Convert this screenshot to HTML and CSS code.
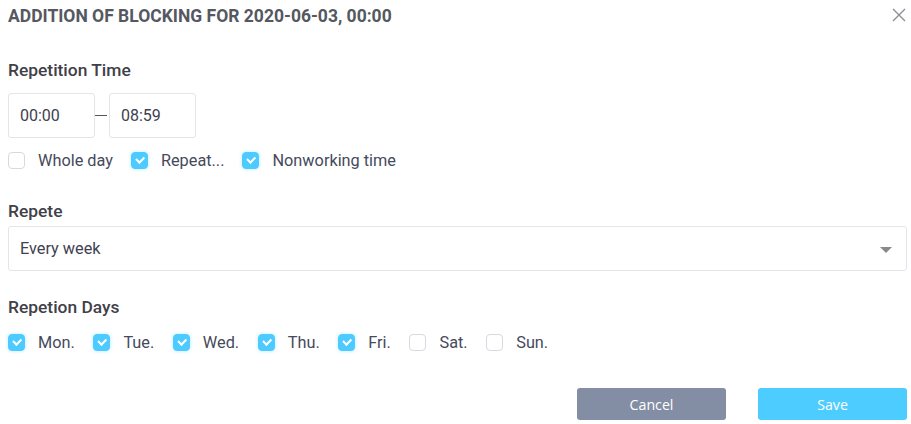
FILE: index.html
```html
<!DOCTYPE html>
<html>
<head>
<meta charset="utf-8">
<link rel="stylesheet" href="styles.css">
</head>
<body>
<div class="dialog">
  <div class="header">
    <h1 class="title">ADDITION OF BLOCKING FOR 2020-06-03, 00:00</h1>
    <button class="close" aria-label="Close">
      <svg width="14" height="14" viewBox="0 0 14 14"><path d="M1 1L13 13M13 1L1 13" stroke="#8a8f98" stroke-width="1.4" fill="none"/></svg>
    </button>
  </div>

  <div class="section sec-time">
    <div class="label">Repetition Time</div>
    <div class="time-row">
      <div class="time-box">00:00</div>
      <span class="dash"></span>
      <div class="time-box">08:59</div>
    </div>
    <div class="checks">
      <label class="check"><span class="box"></span><span class="text">Whole day</span></label>
      <label class="check"><span class="box on"></span><span class="text">Repeat...</span></label>
      <label class="check"><span class="box on"></span><span class="text">Nonworking time</span></label>
    </div>
  </div>

  <div class="section sec-repeat">
    <div class="label">Repete</div>
    <div class="select">
      <span>Every week</span>
      <span class="arrow"></span>
    </div>
  </div>

  <div class="section sec-days">
    <div class="label">Repetion Days</div>
    <div class="checks days">
      <label class="check"><span class="box on"></span><span class="text">Mon.</span></label>
      <label class="check"><span class="box on"></span><span class="text">Tue.</span></label>
      <label class="check"><span class="box on"></span><span class="text">Wed.</span></label>
      <label class="check"><span class="box on"></span><span class="text">Thu.</span></label>
      <label class="check"><span class="box on"></span><span class="text">Fri.</span></label>
      <label class="check"><span class="box"></span><span class="text">Sat.</span></label>
      <label class="check"><span class="box"></span><span class="text">Sun.</span></label>
    </div>
  </div>

  <div class="footer">
    <button class="btn cancel">Cancel</button>
    <button class="btn save">Save</button>
  </div>
</div>
</body>
</html>
```

FILE: styles.css
```css
* { box-sizing: border-box; }
html, body { margin: 0; padding: 0; background: #fff; }
body {
  font-family: Roboto, "Liberation Sans", sans-serif;
  color: #434552;
  width: 911px;
  height: 424px;
  overflow: hidden;
}
.dialog {
  padding: 0 4px 0 8px;
}
.header {
  display: flex;
  justify-content: space-between;
  align-items: flex-start;
  height: 60px;
  padding-top: 6px;
}
.title {
  margin: 0;
  font-size: 17.5px;
  font-weight: 700;
  color: #555860;
  line-height: 20px;
}
.close {
  border: 0;
  background: none;
  padding: 0;
  margin: 2px 1px 0 0;
  width: 14px;
  height: 14px;
  display: flex;
}
.label {
  font-size: 17.4px;
  font-weight: 500;
  color: #3f4148;
  line-height: 20px;
}
.sec-time .label { margin-bottom: 13px; }
.time-row {
  display: flex;
  align-items: center;
  height: 45px;
}
.time-box {
  width: 87px;
  height: 45px;
  border: 1px solid #e3e5ea;
  border-radius: 3px;
  font-size: 16px;
  color: #3d4150;
  padding-left: 11px;
  display: flex;
  align-items: center;
}
.dash {
  width: 12px;
  height: 1px;
  background: #555;
  margin: 0 2px 0 0;
}
.checks {
  display: flex;
  align-items: center;
  margin-top: 12px;
  height: 20px;
}
.check {
  display: flex;
  align-items: center;
  margin-right: 18px;
  font-size: 16.3px;
  color: #454a5c;
}
.box {
  width: 17px;
  height: 17px;
  border: 1px solid #d6dae0;
  border-radius: 4px;
  background: #fff;
  margin-right: 13px;
  position: relative;
  flex: none;
}
.box.on {
  background: #4dcaff;
  border-color: #4dcaff;
  box-shadow: 0 0 3px 1px rgba(77, 202, 255, 0.25);
}
.box.on::after {
  content: "";
  position: absolute;
  left: 4px;
  top: 3.5px;
  width: 6px;
  height: 3.5px;
  border-left: 2px solid #fff;
  border-bottom: 2px solid #fff;
  transform: rotate(-45deg);
}
.sec-repeat { margin-top: 31px; }
.sec-repeat .label { margin-bottom: 5px; }
.select {
  height: 45px;
  border: 1px solid #e3e5ea;
  border-radius: 3px;
  display: flex;
  align-items: center;
  justify-content: space-between;
  padding: 0 14px 0 11px;
  font-size: 16.3px;
  color: #3f4250;
}
.arrow {
  width: 0;
  height: 0;
  border-left: 6px solid transparent;
  border-right: 6px solid transparent;
  border-top: 6px solid #8a8a8a;
  margin-top: 2px;
}
.sec-days { margin-top: 26px; }
.days { margin-top: 15px; }
.days .check { margin-right: 18.6px; }
.footer {
  display: flex;
  justify-content: flex-end;
  gap: 32px;
  margin-top: 36px;
}
.btn {
  width: 149px;
  height: 32px;
  border: 0;
  border-radius: 3px;
  color: #fff;
  font-family: "Open Sans", "Noto Sans", sans-serif;
  font-size: 14.2px;
  padding: 0;
}
.cancel { background: #838da3; }
.save { background: #4dcdff; }
```
